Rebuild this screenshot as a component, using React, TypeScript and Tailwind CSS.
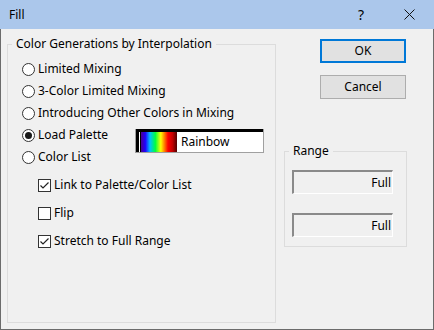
import React from "react";

const font = { fontFamily: '"Noto Sans", "Segoe UI", sans-serif' };

function Radio({ label, checked }: { label: string; checked?: boolean }) {
  return (
    <div className="flex items-center h-[22px] gap-[3px]">
      <span className="w-[13px] h-[13px] rounded-full border border-[#333333] bg-white flex items-center justify-center shrink-0">
        {checked && <span className="w-[7px] h-[7px] rounded-full bg-[#1a1a1a]" />}
      </span>
      <span className="text-[12px] leading-[16px] text-black whitespace-nowrap">{label}</span>
    </div>
  );
}

function Check({ label, checked }: { label: string; checked?: boolean }) {
  return (
    <div className="flex items-center h-[28px] gap-[3px]">
      <span className="w-[13px] h-[13px] border border-[#333333] bg-white flex items-center justify-center shrink-0">
        {checked && (
          <svg width="11" height="11" viewBox="0 0 11 11">
            <path d="M1.5 5.5 L4 8 L9.5 2.5" fill="none" stroke="#222" strokeWidth="1.2" />
          </svg>
        )}
      </span>
      <span className="text-[12px] leading-[16px] text-black whitespace-nowrap">{label}</span>
    </div>
  );
}

function RangeField() {
  return (
    <div className="w-[101px] h-[24px] ml-[7px] border-t-2 border-l-2 border-t-[#8a8a8a] border-l-[#8a8a8a] border-r border-b border-r-white border-b-white bg-[#f0f0f0] flex items-center justify-end pr-[1px]">
      <span className="text-[12px] leading-[16px] text-black">Full</span>
    </div>
  );
}

export default function App() {
  return (
    <div style={font} className="w-[434px] h-[330px] flex flex-col bg-[#f0f0f0] select-none">
      <div className="h-[29px] bg-[#abc7eb] flex items-center shrink-0">
        <span className="ml-[9px] text-[12px] leading-[16px] text-black">Fill</span>
        <span className="ml-auto mr-[40px] text-[14px] leading-[16px] text-black">?</span>
        <svg className="mr-[19px]" width="11" height="11" viewBox="0 0 11 11">
          <path d="M0.5 0.5 L10.5 10.5 M10.5 0.5 L0.5 10.5" stroke="#111" strokeWidth="1" />
        </svg>
      </div>
      <div className="flex-1 flex items-start border-l border-r border-b border-[#6b6b6b]">
        <fieldset className="ml-[6px] mt-[7px] w-[269px] h-[287px] border border-[#dcdcdc] flex flex-col">
          <legend className="ml-[4px] px-[4px] text-[12px] leading-[16px] text-black">
            Color Generations by Interpolation
          </legend>
          <div className="pt-[6px] pl-[14px] flex flex-col">
            <Radio label="Limited Mixing" />
            <Radio label="3-Color Limited Mixing" />
            <Radio label="Introducing Other Colors in Mixing" />
            <div className="flex items-start h-[22px]">
              <div className="w-[113px]">
                <Radio label="Load Palette" checked />
              </div>
              <div className="mt-[5px] w-[129px] h-[24px] border-l border-b border-r border-[#a0a0a0] bg-white flex">
                <div className="w-full h-full border-t-[3px] border-l-[3px] border-black flex items-stretch">
                  <div className="w-[1px] bg-white" />
                  <div className="w-[1px] bg-black" />
                  <div className="w-[36px] bg-[linear-gradient(to_right,#4a0090,#2000ff_12%,#00c0ff_25%,#00ff40_40%,#ffff00_55%,#ff8000_65%,#ff0000_75%,#c00000_88%,#500000)]" />
                  <span className="ml-[4px] text-[12px] leading-[16px] text-black self-center">Rainbow</span>
                </div>
              </div>
            </div>
            <Radio label="Color List" />
            <div className="mt-[3px] pl-[16px] flex flex-col">
              <Check label="Link to Palette/Color List" checked />
              <Check label="Flip" />
              <Check label="Stretch to Full Range" checked />
            </div>
          </div>
        </fieldset>
        <div className="ml-[8px] mt-[10px] w-[123px] flex flex-col">
          <button className="ml-[36px] w-[86px] h-[24px] border-2 border-[#0078d7] bg-[#e1e1e1] text-[12px] leading-[16px] text-black">
            OK
          </button>
          <button className="ml-[36px] mt-[12px] w-[86px] h-[24px] border border-[#adadad] bg-[#e1e1e1] text-[12px] leading-[16px] text-black">
            Cancel
          </button>
          <fieldset className="mt-[44px] w-[123px] h-[104px] border border-[#dcdcdc] flex flex-col">
            <legend className="ml-[4px] px-[4px] text-[12px] leading-[16px] text-black">Range</legend>
            <div className="mt-[11px]">
              <RangeField />
            </div>
            <div className="mt-[19px]">
              <RangeField />
            </div>
          </fieldset>
        </div>
      </div>
    </div>
  );
}
